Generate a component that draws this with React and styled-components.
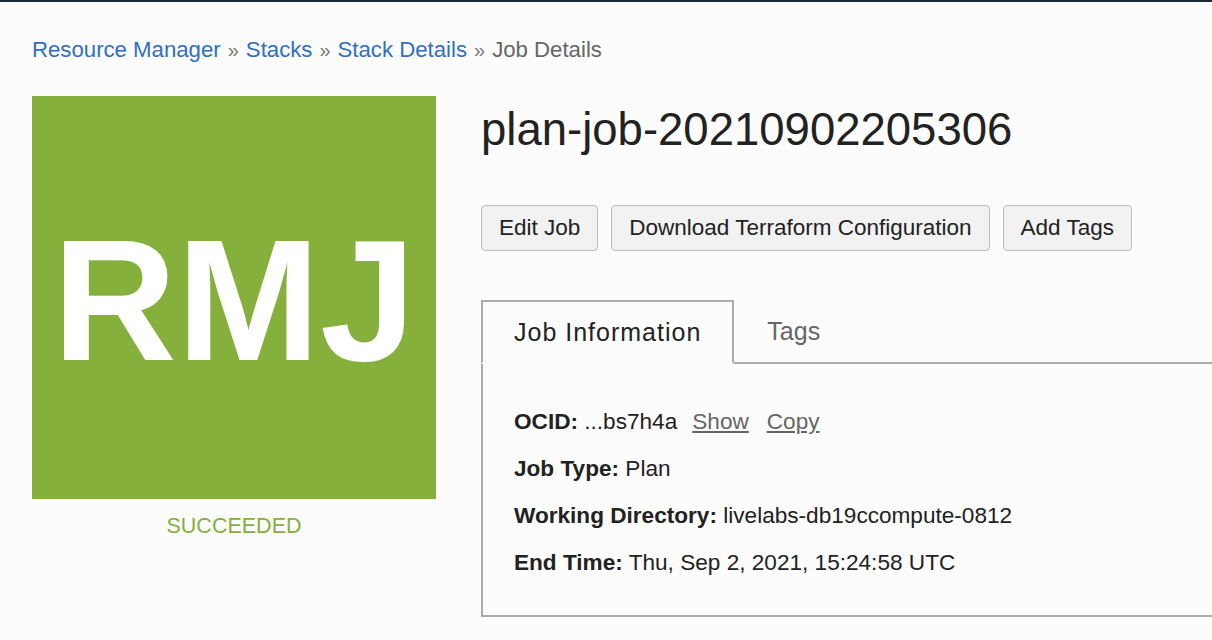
import React from 'react';
import styled, { createGlobalStyle } from 'styled-components';

const GlobalStyle = createGlobalStyle`
  html, body {
    margin: 0;
    padding: 0;
    background: #fcfcfc;
    overflow: hidden;
  }
  body {
    font-family: 'Liberation Sans', Arial, sans-serif;
    color: #222;
  }
`;

const TopBar = styled.div`
  height: 2px;
  background: #1f2a34;
`;

const Page = styled.div`
  padding: 35px 0 0 32px;
`;

const Breadcrumb = styled.nav`
  font-size: 22.2px;
  line-height: 26px;
  color: #666;
  margin-bottom: 33px;
`;

const Crumb = styled.a`
  color: #2f6fc4;
  text-decoration: none;
`;

const Sep = styled.span`
  color: #777;
  margin: 0 7px;
  font-size: 20px;
`;

const Layout = styled.div`
  display: flex;
  align-items: flex-start;
  gap: 45px;
`;

const Side = styled.div`
  width: 404px;
  flex: none;
  display: flex;
  flex-direction: column;
  align-items: center;
`;

const Badge = styled.div`
  width: 404px;
  height: 403px;
  background: #86b03c;
  color: #fff;
  display: flex;
  align-items: center;
  justify-content: center;
  font-weight: 700;
  font-size: 172px;
  line-height: 1;
  padding-top: 4px;
  box-sizing: border-box;
`;

const Status = styled.div`
  margin-top: 15px;
  font-size: 21.5px;
  line-height: 24px;
  color: #86b03c;
`;

const Main = styled.div`
  flex: 1;
  min-width: 0;
  padding-top: 7px;
`;

const Title = styled.h1`
  margin: 0;
  font-size: 45.5px;
  line-height: 54px;
  font-weight: 400;
  color: #222;
`;

const Actions = styled.div`
  display: flex;
  gap: 13px;
  margin-top: 48px;
`;

const Button = styled.button`
  height: 46px;
  padding: 0 17px;
  font-family: inherit;
  font-size: 22.5px;
  color: #222;
  background: #f2f2f2;
  border: 1.5px solid #bcbcbc;
  border-radius: 4px;
`;

const Tabs = styled.div`
  margin-top: 49px;
  margin-right: -20px;
`;

const TabList = styled.div`
  display: flex;
  align-items: flex-end;
  border-bottom: 2px solid #ababab;
`;

const ActiveTab = styled.div`
  height: 60px;
  display: flex;
  align-items: center;
  padding: 0 31px;
  font-size: 25px;
  letter-spacing: 1px;
  margin-bottom: -2px;
  color: #222;
  background: #fcfcfc;
  border: 2px solid #ababab;
  border-bottom-color: #fcfcfc;
`;

const Tab = styled.div`
  height: 62px;
  display: flex;
  align-items: center;
  padding: 0 33px;
  font-size: 25px;
  color: #666;
`;

const Panel = styled.div`
  border: 2px solid #ababab;
  border-top: none;
  padding: 34px 31px 29px;
`;

const Row = styled.div`
  font-size: 22.6px;
  line-height: 47px;
  white-space: nowrap;
`;

const Label = styled.b`
  font-weight: 700;
`;

const ActionLink = styled.a`
  color: #666;
  text-decoration: underline;
  margin-left: ${(p) => p.$gap}px;
`;

export default function App() {
  return (
    <>
      <GlobalStyle />
      <TopBar />
      <Page>
        <Breadcrumb>
          <Crumb href="#">Resource Manager</Crumb>
          <Sep>»</Sep>
          <Crumb href="#">Stacks</Crumb>
          <Sep>»</Sep>
          <Crumb href="#">Stack Details</Crumb>
          <Sep>»</Sep>
          <span>Job Details</span>
        </Breadcrumb>
        <Layout>
          <Side>
            <Badge>RMJ</Badge>
            <Status>SUCCEEDED</Status>
          </Side>
          <Main>
            <Title>plan-job-20210902205306</Title>
            <Actions>
              <Button>Edit Job</Button>
              <Button>Download Terraform Configuration</Button>
              <Button>Add Tags</Button>
            </Actions>
            <Tabs>
              <TabList>
                <ActiveTab>Job Information</ActiveTab>
                <Tab>Tags</Tab>
              </TabList>
              <Panel>
                <Row>
                  <Label>OCID:</Label> ...bs7h4a
                  <ActionLink href="#" $gap={15}>Show</ActionLink>
                  <ActionLink href="#" $gap={18}>Copy</ActionLink>
                </Row>
                <Row>
                  <Label>Job Type:</Label> Plan
                </Row>
                <Row>
                  <Label>Working Directory:</Label> livelabs-db19ccompute-0812
                </Row>
                <Row>
                  <Label>End Time:</Label> Thu, Sep 2, 2021, 15:24:58 UTC
                </Row>
              </Panel>
            </Tabs>
          </Main>
        </Layout>
      </Page>
    </>
  );
}
